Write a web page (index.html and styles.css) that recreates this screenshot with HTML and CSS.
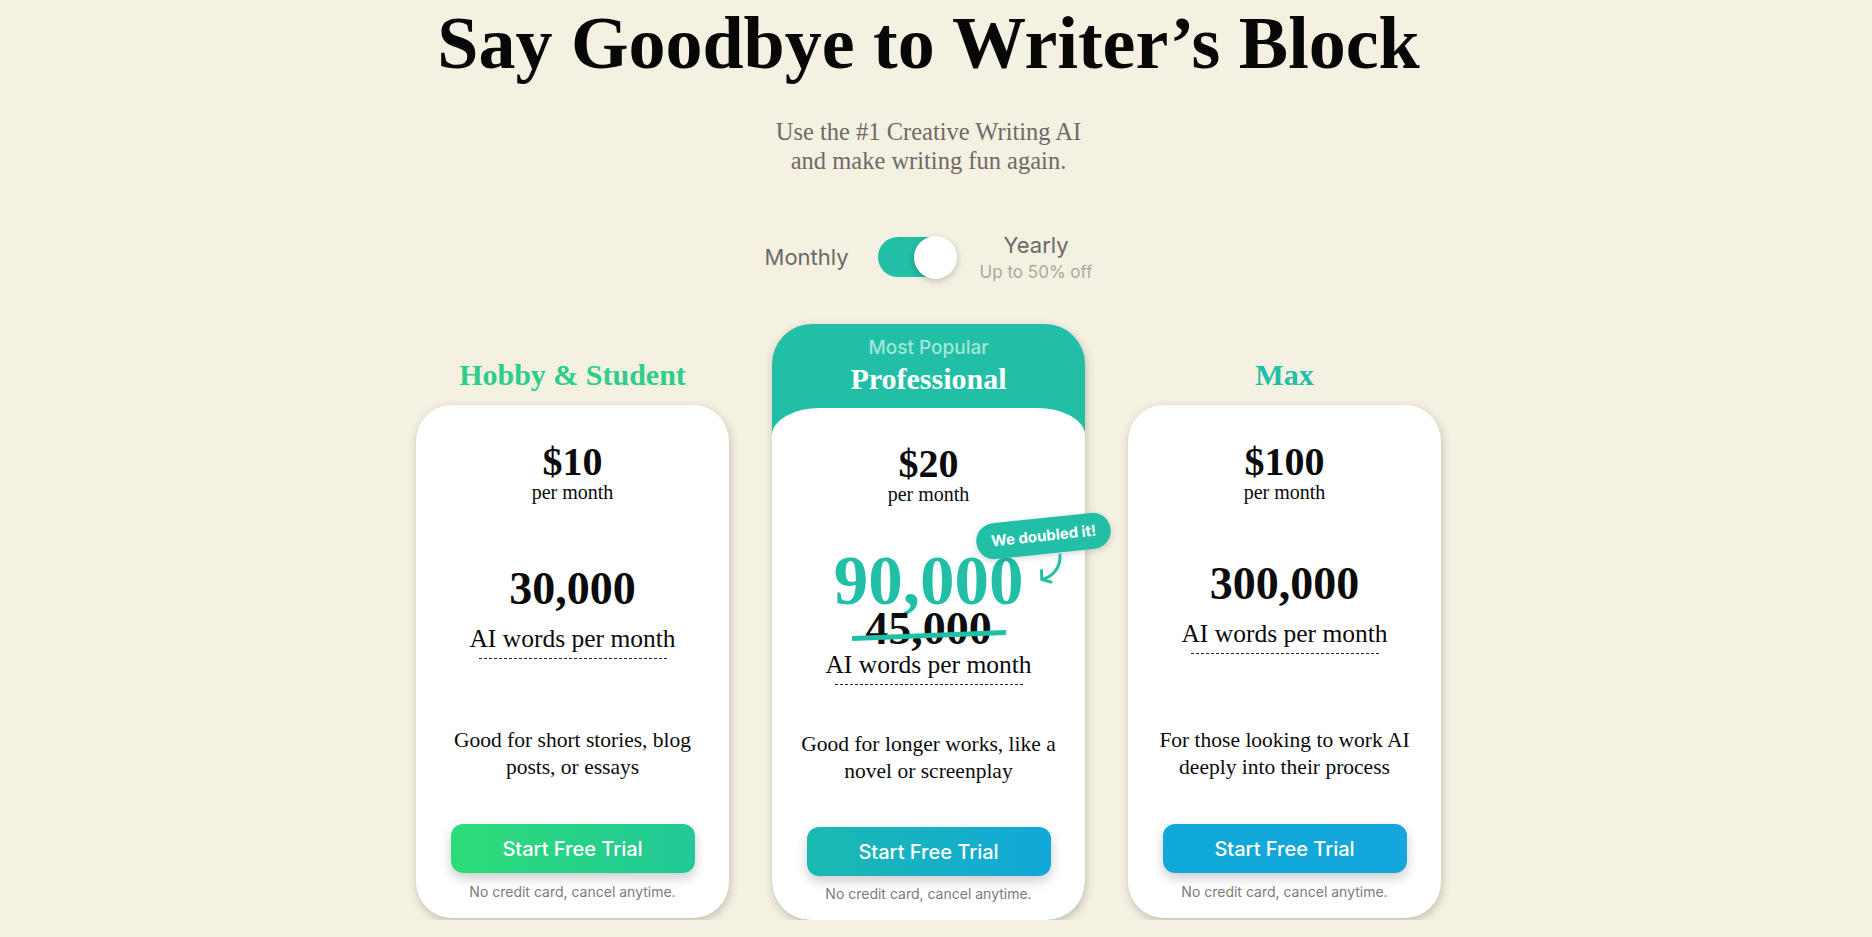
FILE: index.html
```html
<!DOCTYPE html>
<html lang="en">
<head>
<meta charset="utf-8">
<title>Say Goodbye to Writer’s Block</title>
<link rel="stylesheet" href="styles.css">
</head>
<body>
<main class="page">
  <h1 class="title">Say Goodbye to Writer’s Block</h1>
  <p class="subtitle">Use the #1 Creative Writing AI<br>and make writing fun again.</p>

  <div class="billing">
    <span class="billing-label">Monthly</span>
    <span class="switch"><span class="knob"></span></span>
    <span class="billing-yearly">
      <span class="billing-label">Yearly</span>
      <span class="billing-save">Up to 50% off</span>
    </span>
  </div>

  <section class="plans">
    <div class="plan">
      <h2 class="plan-name plan-name--green">Hobby &amp; Student</h2>
      <div class="card">
        <div class="price">$10</div>
        <div class="period">per month</div>
        <div class="words">
          <div class="count">30,000</div>
          <div class="unit">AI words per month</div>
        </div>
        <p class="desc">Good for short stories, blog posts, or essays</p>
        <button class="cta cta--green">Start Free Trial</button>
        <div class="note">No credit card, cancel anytime.</div>
      </div>
    </div>

    <div class="plan plan--featured">
      <div class="featured-head">
        <div class="popular">Most Popular</div>
        <h2 class="plan-name plan-name--white">Professional</h2>
      </div>
      <div class="card card--featured">
        <div class="price">$20</div>
        <div class="period">per month</div>
        <div class="words words--doubled">
          <div class="count count--new">90,000</div>
          <div class="count count--old"><span class="strike">45,000</span></div>
          <div class="unit unit--tight">AI words per month</div>
        </div>
        <p class="desc desc--featured">Good for longer works, like a novel or screenplay</p>
        <button class="cta cta--teal cta--featured">Start Free Trial</button>
        <div class="note note--featured">No credit card, cancel anytime.</div>

        <span class="badge">We doubled it!</span>
        <svg class="badge-arrow" width="30" height="36" viewBox="0 0 30 36" fill="none">
          <path d="M24 5 C24.5 17 18 26 6.5 29.5" stroke="#20bfa6" stroke-width="3" stroke-linecap="round"/>
          <path d="M5.5 20.5 L5.8 29.6 L15 32" stroke="#20bfa6" stroke-width="3" stroke-linecap="round" stroke-linejoin="round"/>
        </svg>
      </div>
    </div>

    <div class="plan">
      <h2 class="plan-name plan-name--teal">Max</h2>
      <div class="card">
        <div class="price">$100</div>
        <div class="period">per month</div>
        <div class="words words--max">
          <div class="count">300,000</div>
          <div class="unit">AI words per month</div>
        </div>
        <p class="desc">For those looking to work AI deeply into their process</p>
        <button class="cta cta--blue">Start Free Trial</button>
        <div class="note">No credit card, cancel anytime.</div>
      </div>
    </div>
  </section>
</main>
</body>
</html>
```

FILE: styles.css
```css
* { box-sizing: border-box; }

html, body {
  margin: 0;
  padding: 0;
  background: #f4f0e2;
}

body {
  font-family: "Liberation Serif", "Times New Roman", serif;
  color: #0b0b0b;
  overflow: hidden;
}

.page {
  width: calc(100% - 15px);
  display: flex;
  flex-direction: column;
  align-items: center;
}

.title {
  margin: 7px 0 0;
  font-size: 74px;
  line-height: 73px;
  font-weight: 700;
  color: #070707;
  white-space: nowrap;
}

.subtitle {
  margin: 37px 0 0;
  font-size: 24.5px;
  line-height: 29px;
  color: #6d6a66;
  text-align: center;
}

/* billing toggle */
.billing {
  margin-top: 57px;
  display: flex;
  align-items: center;
  font-family: "Inter", "Liberation Sans", sans-serif;
}

.billing-label {
  font-size: 22px;
  line-height: 26px;
  color: #6b6966;
}

.switch {
  position: relative;
  width: 78px;
  height: 40px;
  border-radius: 20px;
  background: #20bfa6;
  margin: 0 24px 0 29px;
}

.knob {
  position: absolute;
  right: -1.5px;
  top: -1.5px;
  width: 43px;
  height: 43px;
  border-radius: 50%;
  background: #fff;
  box-shadow: 0 2px 6px rgba(0, 0, 0, 0.22);
}

.billing-yearly {
  display: flex;
  flex-direction: column;
  align-items: center;
}

.billing-save {
  margin-top: 4px;
  font-size: 17px;
  line-height: 20px;
  color: #aba79f;
}

/* plans */
.plans {
  margin-top: 42px;
  display: flex;
  align-items: flex-start;
  gap: 43px;
}

.plan {
  width: 313px;
  display: flex;
  flex-direction: column;
  align-items: stretch;
}

.plan-name {
  margin: 33px 0 12px;
  font-size: 30px;
  line-height: 36px;
  font-weight: 700;
  text-align: center;
}

.plan-name--green { color: #2ecd8a; }
.plan-name--teal { color: #20bfa6; }
.plan-name--white { color: #fff; margin: 2px 0 0; }

.plan--featured {
  background: #20bfa6;
  border-radius: 40px 40px 38px 38px;
  box-shadow: 1px 3px 9px rgba(70, 60, 40, 0.28);
}

.featured-head {
  padding: 12px 0 11px;
  text-align: center;
}

.popular {
  font-family: "Inter", "Liberation Sans", sans-serif;
  font-size: 19px;
  line-height: 23px;
  font-weight: 500;
  color: rgba(255, 255, 255, 0.6);
}

.card {
  position: relative;
  background: #fff;
  border-radius: 36px;
  padding: 39px 0 18px;
  display: flex;
  flex-direction: column;
  align-items: center;
  text-align: center;
  box-shadow: 1px 3px 9px rgba(70, 60, 40, 0.28);
}

.card--featured {
  padding-top: 38px;
  border-radius: 48px 48px 38px 38px / 27px 27px 38px 38px;
  box-shadow: none;
}

.price {
  font-size: 40px;
  line-height: 36px;
  font-weight: 700;
}

.period {
  font-size: 20px;
  line-height: 24px;
}

.words {
  margin-top: 60px;
  display: flex;
  flex-direction: column;
  align-items: center;
}

.words--max { margin-top: 55px; }

.words--doubled { margin-top: 47px; }

.count {
  font-size: 46px;
  line-height: 50px;
  font-weight: 700;
}

.count--new {
  font-size: 69px;
  line-height: 56px;
  color: #20bfa6;
}

.count--old {
  margin-top: 0;
  line-height: 40px;
  color: #0d0d0d;
}

.strike {
  position: relative;
  display: inline-block;
}

.strike::after {
  content: "";
  position: absolute;
  left: -13px;
  right: -14px;
  top: 24px;
  height: 5px;
  background: #20bfa6;
  transform: rotate(-2.2deg);
}

.unit {
  margin-top: 10px;
  font-size: 25.5px;
  line-height: 30px;
}

.unit--tight { margin-top: 0.5px; }

.unit::after {
  content: "";
  display: block;
  width: 188px;
  height: 1px;
  margin: 4px auto 0;
  background: repeating-linear-gradient(90deg, #222 0 3px, transparent 3px 5px);
}

.desc {
  margin: 68px 0 0;
  width: 276px;
  font-size: 21.5px;
  line-height: 27px;
}

.words--max + .desc { margin-top: 73px; }

.desc--featured { margin-top: 46.5px; }

.cta {
  margin-top: 43px;
  width: 244px;
  height: 49px;
  border: 0;
  border-radius: 12px;
  font-family: "Inter", "Liberation Sans", sans-serif;
  font-size: 20px;
  font-weight: 500;
  color: #fff;
  box-shadow: 0 5px 12px rgba(0, 0, 0, 0.2);
}

.cta--green { background: linear-gradient(90deg, #2ddc77, #23c899); }
.cta--teal { background: linear-gradient(90deg, #1bbab0, #12a7da); }
.cta--blue { background: linear-gradient(90deg, #10a9d8, #14a6dc); }
.cta--featured { margin-top: 42px; }

.note {
  margin-top: 10px;
  font-family: "Inter", "Liberation Sans", sans-serif;
  font-size: 14px;
  line-height: 17px;
  color: #7c7b79;
}

.note--featured { margin-top: 9px; }

.badge {
  position: absolute;
  left: 204px;
  top: 110px;
  padding: 9px 15px 9px;
  border-radius: 20px;
  background: #20bfa6;
  font-family: "Inter", "Liberation Sans", sans-serif;
  font-size: 15px;
  line-height: 18px;
  font-weight: 700;
  color: #fff;
  white-space: nowrap;
  transform: rotate(-6deg);
  box-shadow: 0 2px 6px rgba(0, 0, 0, 0.16);
}

.badge-arrow {
  position: absolute;
  left: 264px;
  top: 142px;
}
```
